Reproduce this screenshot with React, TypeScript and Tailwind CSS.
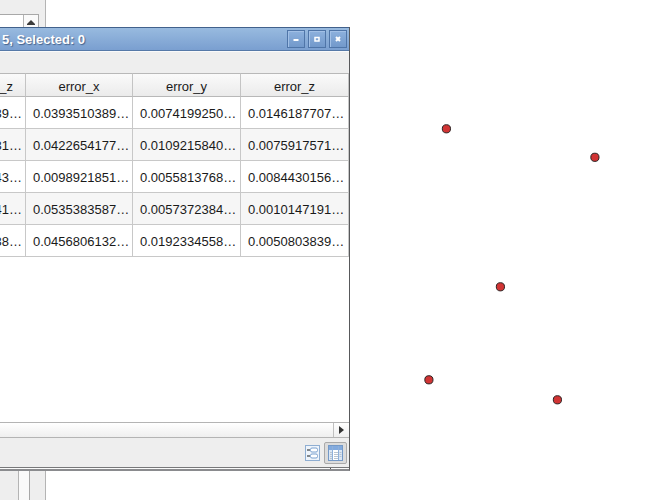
import React from "react";

const rows = [
  ["39…", "0.0393510389…", "0.0074199250…", "0.0146187707…"],
  ["31…", "0.0422654177…", "0.0109215840…", "0.0075917571…"],
  ["43…", "0.0098921851…", "0.0055813768…", "0.0084430156…"],
  ["41…", "0.0535383587…", "0.0057372384…", "0.0010147191…"],
  ["38…", "0.0456806132…", "0.0192334558…", "0.0050803839…"],
];

const headers = ["_z", "error_x", "error_y", "error_z"];

const points = [
  { x: 446, y: 129 },
  { x: 594.5, y: 157.5 },
  { x: 500, y: 287 },
  { x: 428.5, y: 380 },
  { x: 557, y: 400 },
];

function LayersPanel() {
  return (
    <aside className="flex h-screen w-[46px] flex-col justify-between border-r border-[#b4b4b4] bg-[#eeeeee]">
      <div className="mt-3.5 mr-1.5 flex h-5 border-t border-r border-[#a8a8a8] bg-white">
        <button
          type="button"
          aria-label="Scroll up"
          className="ml-auto flex w-[15px] items-start justify-center border-l border-[#b4b4b4] bg-[#fafafa] pt-[5px]"
        >
          <svg width="8" height="5" viewBox="0 0 8 5">
            <path d="M4 0 8 4v1H0V4z" fill="#3c3c3c" />
          </svg>
        </button>
      </div>
      <div className="flex h-8">
        <div className="w-[19px] border-r border-[#b4b4b4]" />
        <div className="w-[11px] border-r border-[#a8a8a8] bg-[#fafafa]" />
      </div>
    </aside>
  );
}

function TitleButton({ label, children }: { label: string; children: React.ReactNode }) {
  return (
    <button
      type="button"
      aria-label={label}
      className="flex size-[18px] items-center justify-center border border-[#4f75a8] bg-linear-to-b from-[#8db1dd] to-[#7299cb] shadow-[inset_1px_1px_0_#a2c0e6]"
    >
      <svg width="6" height="6" viewBox="0 0 6 6" fill="none" stroke="#ffffff">
        {children}
      </svg>
    </button>
  );
}

function TitleBar() {
  return (
    <header className="flex h-6 items-center border-t border-b border-t-[#41618c] border-b-[#5679a8] bg-linear-to-b from-[#98badf] to-[#7a9fd0] pr-0.5 pl-0.5">
      <h1 className="flex-1 pt-0.5 text-[13px] font-bold text-white [text-shadow:1px_1px_1px_#46638c]">
        5, Selected: 0
      </h1>
      <div className="flex gap-[3px]">
        <TitleButton label="Minimize">
          <path d="M.5 4h5" strokeWidth="2" />
        </TitleButton>
        <TitleButton label="Maximize">
          <path d="M1 1.5h4V5H1z" strokeWidth="1.5" />
        </TitleButton>
        <TitleButton label="Close">
          <path d="m1 1 4 4m0-4L1 5" strokeWidth="2" />
        </TitleButton>
      </div>
    </header>
  );
}

function AttributeTable() {
  return (
    <table className="w-full table-fixed border-separate border-spacing-0 text-[13px] leading-4 text-[#1a1a1a]">
      <colgroup>
        <col className="w-[26px]" />
        <col className="w-[107px]" />
        <col className="w-[108px]" />
        <col />
      </colgroup>
      <thead>
        <tr className="h-6">
          {headers.map((h, i) => (
            <th
              key={h}
              className={`overflow-hidden border-t border-r border-b border-t-[#b8b8b8] border-r-[#c4c4c4] border-b-[#b8b8b8] bg-linear-to-b from-[#fafafa] to-[#ebebeb] p-0 pt-1 font-normal ${
                i === 0 ? "pr-3 text-right" : "text-center"
              }`}
            >
              {i === 0 ? <div className="flex justify-end">{h}</div> : h}
            </th>
          ))}
        </tr>
      </thead>
      <tbody>
        {rows.map((row, r) => (
          <tr key={r} className="h-8 even:bg-[#f6f6f6]">
            {row.map((value, i) => (
              <td
                key={i}
                className={`overflow-hidden border-r border-b border-[#c8c8c8] p-0 pt-0.5 whitespace-nowrap ${
                  i === 0 ? "pr-[3px]" : "pl-[7px]"
                }`}
              >
                {i === 0 ? <div className="flex justify-end">{value}</div> : value}
              </td>
            ))}
          </tr>
        ))}
      </tbody>
    </table>
  );
}

function FormIcon() {
  return (
    <svg width="15" height="16" viewBox="0 0 15 16" fill="none">
      <rect x=".5" y=".5" width="14" height="15" fill="#eef4fb" stroke="#8faed2" />
      <path d="M2 5h3M2 11h3" stroke="#5c6166" strokeWidth="1.4" />
      <rect x="5.5" y="3" width="7" height="4" rx="1.5" fill="#ffffff" stroke="#7ba1cf" />
      <rect x="5.5" y="9" width="7" height="4" rx="1.5" fill="#ffffff" stroke="#7ba1cf" />
    </svg>
  );
}

function TableIcon() {
  return (
    <svg width="15" height="16" viewBox="0 0 15 16" fill="none">
      <rect x=".5" y=".5" width="14" height="15" fill="#ffffff" stroke="#7499c7" />
      <path d="M1 1h13v4H1z" fill="#82aade" />
      <path d="M1 5h3v10H1zM11 5h3v10h-3z" fill="#dbe7f5" />
      <path d="M4.5 1v14M10.5 1v14" stroke="#8fb0da" />
      <path d="M2 7.5h2M6 7.5h4M11.5 7.5h2M2 9.5h2M6 9.5h4M11.5 9.5h2M2 11.5h2M6 11.5h4M11.5 11.5h2M2 13.5h2M6 13.5h4" stroke="#b9c4d0" />
    </svg>
  );
}

export default function App() {
  return (
    <main className="relative min-h-screen overflow-hidden bg-white font-['Liberation_Sans',Arial,sans-serif]">
      <LayersPanel />

      <svg className="absolute inset-0 size-full" role="img" aria-label="Map points">
        {points.map((p) => (
          <circle key={p.x} cx={p.x + 0.4} cy={p.y - 0.2} r="4.1" fill="#d13434" stroke="#2b2222" />
        ))}
      </svg>

      <section className="absolute top-[27px] left-0 flex h-[444px] w-[350px] flex-col border-r border-b-2 border-r-[#58595b] border-b-[#8a8b8e] bg-[#eeeeee]">
        <TitleBar />
        <div className="h-[22px] border-t border-[#fafafa]" />
        <div className="flex-1 bg-white">
          <AttributeTable />
        </div>
        <div className="flex h-4 border-t border-b border-t-[#b4b4b4] border-b-[#b4b4b4] bg-linear-to-b from-white to-[#efefef]">
          <button
            type="button"
            aria-label="Scroll right"
            className="ml-auto flex w-4 items-center justify-center border-l border-[#c0c0c0]"
          >
            <svg width="5" height="8" viewBox="0 0 5 8">
              <path d="M0 0v8l5-4z" fill="#333333" />
            </svg>
          </button>
        </div>
        <footer className="flex h-[30px] items-center justify-end gap-1 border-b border-[#77787a] pt-px pr-0.5">
          <button type="button" aria-label="Form view" className="flex items-center justify-center">
            <FormIcon />
          </button>
          <button
            type="button"
            aria-label="Table view"
            aria-pressed="true"
            className="flex h-[22px] w-[23px] items-center justify-center rounded-xs border border-[#aaaaaa] bg-[#dcdcdc]"
          >
            <TableIcon />
          </button>
        </footer>
        <div className="flex h-px bg-[#fafafa]">
          <div className="ml-auto mr-[18px] w-px bg-[#555555]" />
        </div>
      </section>
    </main>
  );
}
